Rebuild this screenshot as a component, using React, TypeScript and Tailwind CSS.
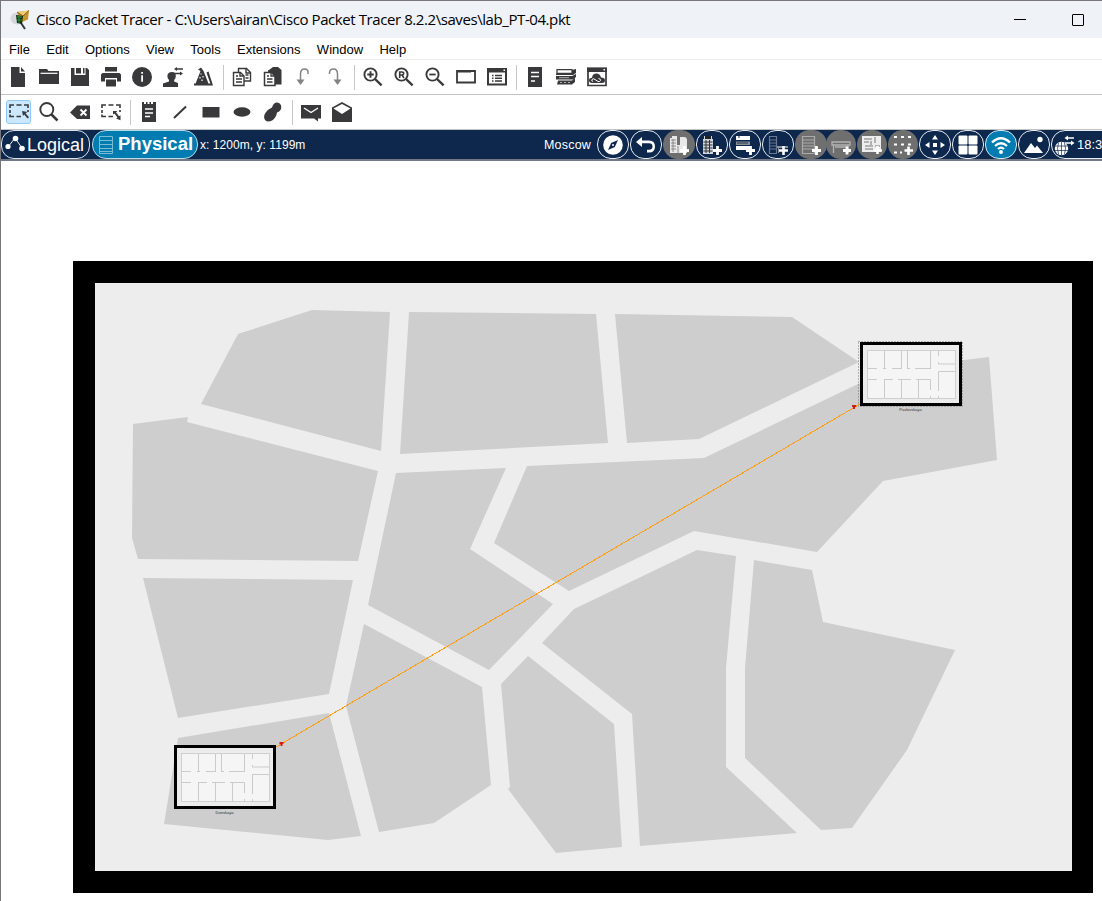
import type { ReactNode } from 'react';

const INK = '#39393b';

function Slot({ children, active = false }: { children: ReactNode; active?: boolean }) {
  return (
    <button className="flex h-[34px] w-[31px] items-center pl-[3px]">
      <span
        className={
          active
            ? 'flex h-6 w-[25px] items-center justify-center rounded-[3px] border border-[#90c8f6] bg-[#cce8ff]'
            : 'flex h-6 w-6 items-center justify-center'
        }
      >
        <svg width="20" height="20" viewBox="0 0 20 20" fill={INK} className="shrink-0">
          {children}
        </svg>
      </span>
    </button>
  );
}

function Separator() {
  return (
    <div className="flex h-[34px] w-[7px] items-center justify-center">
      <div className="h-[25px] w-px bg-[#c8c8c8]" />
    </div>
  );
}

const magnifier = (
  <>
    <circle cx="7.5" cy="7.5" r="6.1" fill="none" stroke={INK} strokeWidth="1.9" />
    <path d="M12 12l6.6 6.4" stroke={INK} strokeWidth="2.4" />
  </>
);

const dashedFrame = (
  <path
    d="M1 6V3h4M7.500 3h5M15 3h4V6M1 8v3M19 8v2M1 12.500v2h4M7.500 14.500h4.500"
    fill="none"
    stroke={INK}
    strokeWidth="1.600"
  />
);

function MainToolbar() {
  return (
    <div className="flex h-[35px] border-b border-[#c4c4c4] pl-[2px]">
      <Slot><path d="M3 0h8.500v6H17v14H3zM13 0l4 4.500h-4z" /></Slot>
      <Slot>
        <path d="M0 2h8l1.500 2H20v13H0z" />
        <path d="M1.500 6.300h17" stroke="#fff" strokeWidth="1.200" />
      </Slot>
      <Slot>
        <path d="M1 1h3.500v7h11V1H17l2 2v16H1z" />
        <path d="M6 1h5v5.500H6zM13 1h1.500v5.500H13z" />
      </Slot>
      <Slot><path d="M4 0h12v4.500H4zM1.500 6h17L20 7.500v7h-4V11H4v3.500H0v-7zM5 12.500h10V19.500H5z" /></Slot>
      <Slot>
        <circle cx="10" cy="10" r="10" />
        <path d="M9.200 5h1.800v1.800H9.200zM9.200 8.300h1.800v6.500H9.200z" fill="#fff" />
      </Slot>
      <Slot>
        <path d="M9 5c2.800 0 4 1.700 3.800 4.200-.1 1.700-.8 2.800-1.600 3.600v1.700l3.800 1.500V20H0v-3.500l6-2v-1.700C5.300 12 4.500 11 4.400 9.200 4.200 6.700 6 5 9 5z" />
        <path d="M13 2h7M11 6.500h7" stroke={INK} strokeWidth="1.400" />
        <path d="M14 0v4l-3-2zM17 4.500v4l3-2z" />
      </Slot>
      <Slot>
        <path d="M4 2.500l3-2L9.500 4l4 10 1.500 4H1L6.500 4zM0 16.500h17V18.500H0z" />
        <path d="M12.500 5.500l2-1 4.500 14h-2z" />
        <path d="M7 6.500v1M6 10v1.500M9 9v1.500M8 12.500v1.500" stroke="#fff" strokeWidth="1.200" fill="none" />
      </Slot>
      <Separator />
      <Slot>
        <g fill="#fff" stroke={INK} strokeWidth="1.400">
          <path d="M6.500 1.500h8l4 4v8.500h-12z" />
          <path d="M1.500 5.500h7l3.500 3.500v9.500H1.500z" />
          <path d="M8 5.500V9h4M14 1.500V6h4M4 9h2M4 12h6M4 15h6M13.500 8h3M13.500 11h3" fill="none" />
        </g>
      </Slot>
      <Slot>
        <path d="M5 3h1l4-3h5l3.500 3v14.500H6z" />
        <path d="M1.500 5.500h7L12 9v9.500H1.500z" fill="#fff" stroke={INK} strokeWidth="1.500" />
        <path d="M8 5.500V9h4M4 9h2M4 12h5.500M4 15h5.500" fill="none" stroke={INK} strokeWidth="1.300" />
      </Slot>
      <Slot>
        <path d="M6.500 14V7q0-5 4-5T14 6v1" fill="none" stroke="#838383" strokeWidth="1.500" />
        <path d="M2.500 12.500h8l-4 5.500z" fill="#838383" />
      </Slot>
      <Slot>
        <path d="M12.500 14V7q0-5-4-5T4.500 6v1" fill="none" stroke="#838383" strokeWidth="1.500" />
        <path d="M8.500 12.500h8l-4 5.500z" fill="#838383" />
      </Slot>
      <Separator />
      <Slot>{magnifier}<path d="M7.500 4.300v6.400M4.300 7.500h6.400" stroke={INK} strokeWidth="1.900" /></Slot>
      <Slot>
        {magnifier}
        <path d="M5.700 11V5h2.200q1.800 0 1.800 1.500T7.900 8H5.700M8 8l2 3" stroke={INK} strokeWidth="1.600" fill="none" />
      </Slot>
      <Slot>{magnifier}<path d="M4.300 7.500h6.400" stroke={INK} strokeWidth="1.800" /></Slot>
      <Slot>
        <path d="M1 4h18v11.500H1z" fill="none" stroke={INK} strokeWidth="1.800" />
        <path d="M1 3h14v2.500H1zM16 4h1v1h-1z" />
      </Slot>
      <Slot>
        <path d="M1 2h18v15.500H1z" fill="none" stroke={INK} strokeWidth="2" />
        <path d="M0 1h20v4.500H0z" />
        <path d="M16.500 2.500H18V4h-1.500z" fill="#fff" />
        <path d="M5 8.500h1.500M8 8.500h7M5 11.200h1.500M8 11.200h7M5 14h1.500M8 14h7" stroke={INK} strokeWidth="1.500" />
      </Slot>
      <Separator />
      <Slot>
        <path d="M3 0h14v20H3z" />
        <path d="M6 5.500h8M6 9.500h8M6 14h4" stroke="#fff" strokeWidth="1.400" />
      </Slot>
      <Slot>
        <path d="M1 2.700h15v3.600H1z" fill="#fff" stroke={INK} strokeWidth="1.200" />
        <path d="M16 3l4-1v4l-3 2H0V6.500h16zM0 9h16l4-2v3l-3 2.500H0zM2 13.500h14l3-2.500v4l-3 2.500H1z" />
        <path d="M4 15.500h2M8 15.500h2M12 15.500h2M3 10.700h10" stroke="#ccc" strokeWidth=".8" />
      </Slot>
      <Slot>
        <path d="M1 1.500h18v17H1z" fill="none" stroke={INK} strokeWidth="1.700" />
        <path d="M0 .500h20V5H0z" />
        <path d="M16.500 2H18v1.500h-1.500z" fill="#fff" />
        <path d="M5 16q-3 0-3-2.700 0-2.400 3-2.600.5-4.200 4.500-4.200 3.500 0 4.500 4 4 0 4 3 0 2.500-3 2.500z" />
        <path d="M6 14.500q-2-.5-1-2t3 0l3 2q2 .5 2.500-1t-2-2" fill="none" stroke="#fff" strokeWidth="1" />
      </Slot>
    </div>
  );
}

function DrawToolbar() {
  return (
    <div className="flex h-[35px] border-b border-[#c4c4c4] pl-[2px]">
      <Slot active>
        {dashedFrame}
        <path d="M13 9l5.500 1-2 1.200 3.500 4-1.500 1.300-3.300-4L14 14z" />
      </Slot>
      <Slot>
        <circle cx="7.800" cy="7.500" r="6.500" fill="none" stroke={INK} strokeWidth="1.900" />
        <path d="M12.500 12.500l6 6" stroke={INK} strokeWidth="2.500" />
      </Slot>
      <Slot>
        <path d="M0 10.500L7 3.500h13v13.500H7z" />
        <path d="M10.500 7.500l6 6M16.500 7.500l-6 6" stroke="#fff" strokeWidth="1.900" />
      </Slot>
      <Slot>
        {dashedFrame}
        <path d="M12 9h4.500L15 10.300l3 4 1.500-1v5l-4.500-1.800 1.500-1-3-4-1.500 1z" />
      </Slot>
      <Separator />
      <Slot>
        <path d="M3 0h2v2h2V0h1.500v2h2V0H12v2h2V0h3v20H3z" />
        <path d="M6 7h8M6 11h8M6 14.500h5" stroke="#fff" strokeWidth="1.400" />
      </Slot>
      <Slot><path d="M4 16L16 4.500" stroke={INK} strokeWidth="2" /></Slot>
      <Slot><path d="M1.500 5h17v10.500h-17z" /></Slot>
      <Slot><ellipse cx="10" cy="10" rx="8.500" ry="4.700" /></Slot>
      <Slot>
        <path d="M9 5.500Q10.500.5 14 .5q4.300.5 4.300 5-.3 3.500-4.300 5-.8 5-4.500 7.800-4.500 2.500-7.300 0-2.200-3.200 0-7Q5 7 9 5.500z" />
      </Slot>
      <Separator />
      <Slot>
        <path d="M0 3h20v13.500H0zM13 15h4v4.500l-4-3z" />
        <path d="M3 6l7 4.500L17 6" fill="none" stroke="#fff" strokeWidth="1.400" />
      </Slot>
      <Slot>
        <path d="M10 0L20 5.500V20H0V5.500z" />
        <path d="M10 2l8.500 4.500L10 12 1.500 6.500z" fill="#fff" />
      </Slot>
    </div>
  );
}

type Tone = 'navy' | 'gray' | 'blue';
const tones: Record<Tone, string> = {
  navy: 'border-[1.5px] border-[#e8edf3] bg-[#0d274d]',
  gray: 'border border-[#6f6f6f] bg-[#6f6f6f]',
  blue: 'border-[1.5px] border-[#d5eaf3] bg-[#007cb0]',
};

function Pill({ tone = 'navy', narrow = false, children }: { tone?: Tone; narrow?: boolean; children: ReactNode }) {
  return (
    <button
      className={`${tones[tone]} ${narrow ? 'w-[30px]' : 'w-8'} flex h-[29px] shrink-0 items-center justify-center rounded-[14px]`}
    >
      <svg width="20" height="20" viewBox="0 0 20 20" fill="#fff" className="shrink-0">
        {children}
      </svg>
    </button>
  );
}

const plus = <path d="M15.500 11v9M11 15.500h9" stroke="#fff" strokeWidth="2.800" />;

function LocationBar() {
  return (
    <div className="flex h-[31px] items-center overflow-hidden border-b-2 border-[#717783] bg-[#0d274d] text-white">
      <button className="flex h-[29px] w-[89px] shrink-0 items-center rounded-[13px] border border-[#dce3eb] pl-[3px]">
        <svg width="20" height="20" viewBox="0 0 20 20" fill="#fff" className="-mt-1 shrink-0">
          <path d="M3 14L10 5l7 10" stroke="#fff" fill="none" strokeWidth=".9" />
          <circle cx="3" cy="13.500" r="2.600" />
          <circle cx="10.500" cy="5.500" r="2.800" />
          <circle cx="17" cy="15.500" r="2.800" />
        </svg>
        <span className="ml-[2px] text-[18px] leading-none">Logical</span>
      </button>
      <button className="ml-[2px] flex h-[29px] w-[106px] shrink-0 items-center rounded-[14px] border-[1.5px] border-[#b9dceb] bg-[#007cb0] pl-[5px]">
        <svg width="16" height="20" viewBox="0 0 16 20" fill="none" stroke="#7dbbd5" className="shrink-0">
          <path d="M1.500 1.500h13v17h-13zM1.500 5.500h13M1.500 9.500h13M1.500 13.500h13M1.500 16.500h13" />
        </svg>
        <span className="ml-[4px] text-[18.500px] font-bold leading-none">Physical</span>
      </button>
      <span className="ml-[2px] whitespace-nowrap pt-px text-[12px] tracking-[0.050px]">x: 1200m, y: 1199m</span>
      <div className="grow" />
      <div className="flex w-[558px] shrink-0 items-center">
        <span className="w-[53px] shrink-0 pt-px text-[12.500px] tracking-[0.200px]">Moscow</span>
        <div className="flex shrink-0 gap-px">
          <Pill>
            <circle cx="10" cy="10" r="9.800" />
            <path d="M15 5l-3.200 7L5 15l3.200-7z" fill="#0d274d" />
            <circle cx="10" cy="10" r="1" />
          </Pill>
          <Pill><path d="M6 2v3.500h7q6 0 6 6t-6 6h-2v-2.700h2q3.500 0 3.500-3.300T13 8.200H6V12L0 7z" /></Pill>
          <Pill tone="gray">
            <path d="M1 3h2V1h5v9h3V2h4q3 0 3 3v13H1z" fill="#e8e8e8" />
            <path d="M2 5h5M2 8h5M2 11h5M2 14h5M4 4v13M9 11v7" stroke="#777" strokeWidth=".8" />
            {plus}
          </Pill>
          <Pill>
            <path d="M2 1h8v3H2zM1 4h10v15H1z" fill="#cfd6df" />
            <path d="M3 1h6v3H3z" fill="#222" />
            <path d="M1.500 7h9M1.500 10h9M1.500 13h9M1.500 16h9M4 5v13M7.500 5v13" stroke="#333" />
            {plus}
          </Pill>
          <Pill>
            <path d="M1 1h14v4H1zM1 11h14v4H1z" />
            <path d="M1 6.500h14v3.500H1z" fill="#888f99" />
            <path d="M3 2h2M2 8h11" stroke="#26364d" />
            {plus}
          </Pill>
          <Pill>
            <path d="M1.500 1.500h7v17h-7zM1.500 5h7M1.500 8h7M1.500 11h7M1.500 14h7" fill="none" stroke="#67788f" strokeWidth="1.200" />
            <path d="M9 11h11v2H9zM10 13h1v5h-1z" fill="#8993a1" />
            <path d="M15.500 11v9M11 15.500h9" stroke="#fff" strokeWidth="2.600" />
          </Pill>
          <Pill tone="gray">
            <path d="M1.500 1.500h12v17h-12zM1.500 5h12M1.500 8h12M1.500 11h12M1.500 14h12" fill="none" stroke="#aaa" strokeWidth="1.200" />
            {plus}
          </Pill>
        </div>
        <div className="-ml-px flex shrink-0 gap-px">
          <Pill tone="gray" narrow>
            <path d="M1 7h18v3H1zM2.500 10v8M17 10v8M4 12h13" fill="none" stroke="#b3b3b3" strokeWidth="1.300" />
            <path d="M16 11.500v8M12 15.500h8" stroke="#fff" strokeWidth="2.800" />
          </Pill>
          <Pill tone="gray" narrow>
            <path d="M0 1h19v16H0z" fill="#eee" />
            <path d="M2 4h8M13 2v6M2 7h5M9 6v4M3 11h8M13 11h5M3 14h8" stroke="#777" />
            <path d="M15.500 11v8M11.500 15.500h8.500" stroke="#fff" strokeWidth="2.600" />
          </Pill>
          <Pill tone="gray" narrow>
            <path d="M1 2h3M8 2h3M15 2h3M1 9.500h3M8 9.500h3M15 9.500h3M1 17.500h3M7 17.500h2" stroke="#fff" strokeWidth="2" />
            <path d="M15.500 11.500v8.500M11.500 15.500h8.500" stroke="#fff" strokeWidth="2.600" />
          </Pill>
          <Pill>
            <path d="M10 0l3 4.500H7zM10 20l3-4.500H7zM0 10l4.500-3v6zM20 10l-4.500-3v6zM8 8h4v4H8z" />
          </Pill>
          <Pill>
            <rect x=".5" y=".5" width="9" height="9" rx="1" />
            <rect x="10.500" y=".5" width="9" height="9" rx="1" />
            <rect x=".5" y="10.500" width="9" height="9" rx="1" />
            <rect x="10.500" y="10.500" width="9" height="9" rx="1" />
          </Pill>
          <Pill tone="blue">
            <path d="M1 7.500q9-8.500 18 0M4 11q6-5.500 12 0M7 14q3-2.800 6 0" fill="none" stroke="#fff" strokeWidth="2.300" />
            <circle cx="10" cy="17" r="2" />
          </Pill>
          <Pill>
            <path d="M0 18l7-10 4 5 2-2.500L19 18z" />
            <circle cx="16" cy="4.500" r="2.700" />
          </Pill>
          <button className="flex h-[29px] w-[75px] shrink-0 items-center rounded-[14px] border-[1.5px] border-[#e8edf3] pl-[2px]">
            <svg width="21" height="22" viewBox="0 0 21 22" fill="none" stroke="#fff" className="shrink-0">
              <circle cx="7.500" cy="14.500" r="6.700" fill="#fff" stroke="none" />
              <path d="M1 12h13M1 16.500h13M7.500 8v13M4.500 9q-2 5.500 0 11M10.500 9q2 5.500 0 11" stroke="#0d274d" strokeWidth=".7" />
              <path d="M13 4h7M11 9h7" strokeWidth="1.500" />
              <path d="M14 1.500v5L10.500 4zM17 6.500v5l3.500-2.500z" fill="#fff" stroke="none" />
            </svg>
            <span className="ml-[2px] whitespace-nowrap text-[13px] leading-none">18:3</span>
          </button>
        </div>
      </div>
    </div>
  );
}

const blocks = [
  '201,404 238,334 312,310 390,312 381,451',
  '409,312 596,314 608,443 400,454',
  '615,314 792,317 859,362 699,439 627,443',
  '133,424 188,417 187,422 378,471 358,561 138,559 132,538',
  '396,473 506,468 470,549 553,604 489,670 368,605',
  '527,466 704,458 860,383 940,363 989,357 997,460 883,481 817,552 694,531 569,591 494,543',
  '143,578 353,580 329,694 178,718',
  '178,738 329,713 361,836 328,840 164,824',
  '364,624 482,687 491,785 434,823 379,832 346,706',
  '501,684 528,656 614,724 622,847 556,853 508,789 510,787',
  '574,609 697,550 736,556 726,668 726,767 797,833 640,846 632,714 542,643',
  '754,560 812,570 823,622 955,650 907,750 852,828 821,830 745,758 745,668',
];

function Building({ x, y, label, selected = false }: { x: number; y: number; label: string; selected?: boolean }) {
  return (
    <g transform={`translate(${x} ${y})`}>
      {selected && <rect x="-1.500" y="-.5" width="104" height="65" fill="none" stroke="#777" strokeDasharray="1 2" />}
      <rect width="102" height="64" fill="#000" />
      <rect x="3" y="3" width="96" height="58" fill="#ececec" />
      <rect x="7.500" y="8.500" width="88" height="48" fill="#f5f5f5" stroke="#d0d0d0" />
      <path
        d="M24.500 9v18M41.500 9v18M47.500 9v18M70.500 9v18M78.500 9v5M78.500 20v2H95M95 29.500H78.500V49M78.500 54v2M8 26.500h9M23 26.500h3M32 26.500h10M48 26.500h2M55 26.500h15M8 37.500h9M24 37.500h9M38 37.500h13M56 37.500h14.500V48M70.500 54v2M24.500 38v18M41.500 38v18M58.500 38v18"
        fill="none"
        stroke="#cbcbcb"
      />
      <text x="50.500" y="69" textAnchor="middle" fontSize="4" fill="#333" fontFamily="Liberation Sans, sans-serif">
        {label}
      </text>
    </g>
  );
}

function CityMap() {
  return (
    <div className="h-[632px] w-[1020px] border-[22px] border-r-[21px] border-black bg-[#ededed]">
      <svg width="977" height="588" viewBox="95 283 977 588" className="block">
        <g fill="#cecece">
          {blocks.map((points) => (
            <polygon key={points} points={points} />
          ))}
        </g>
        <path d="M276 747L860 404" stroke="#ff9d14" strokeWidth="1" shapeRendering="crispEdges" />
        <path d="M852 405h4v2h-1v2h-2v-2h-1zM279.500 742h4v2h-1v2h-2v-2h-1z" fill="#d51c1c" />
        <Building x={860} y={342} label="Pavlovskaya" selected />
        <Building x={174} y={745} label="Donskaya" />
      </svg>
    </div>
  );
}

export default function App() {
  return (
    <div className="flex h-[901px] w-[1102px] flex-col overflow-hidden border-l border-t border-[#77777b] bg-white font-['Liberation_Sans',Arial,sans-serif] text-black">
      <header className="flex h-[37px] shrink-0 items-center bg-[#eff3f8]">
        <svg width="20" height="20" viewBox="0 0 20 20" className="ml-[9px] shrink-0">
          <ellipse cx="7" cy="8.500" rx="6.500" ry="6" fill="#d4d8dc" />
          <path d="M11 13l4 6" stroke="#34383c" strokeWidth="2" />
          <path d="M7 2l12-1.500-1 9-7 3z" fill="#c69532" />
          <path d="M7 2l6 4 6-5.500" fill="#f0ce70" stroke="#6b4a12" strokeWidth=".8" />
          <path d="M6 5l7 1-1 8-5-1z" fill="#102d13" />
          <path d="M7 7h5M7 10h5M9 6v7" stroke="#2b9a37" />
        </svg>
        <span className="ml-[6px] whitespace-nowrap font-['Open_Sans','Noto_Sans',sans-serif] text-[15px] tracking-[-0.420px]">
          Cisco Packet Tracer - C:\Users\airan\Cisco Packet Tracer 8.2.2\saves\lab_PT-04.pkt
        </span>
        <div className="grow" />
        <div className="mr-[46px] h-px w-3 bg-black" />
        <div className="mr-[18px] h-3 w-3 rounded-[1px] border border-black" />
      </header>
      <nav className="flex h-[22px] shrink-0 items-center gap-[16.300px] border-b border-[#ececec] pl-[8px] pt-[2px] text-[13px]">
        {['File', 'Edit', 'Options', 'View', 'Tools', 'Extensions', 'Window', 'Help'].map((item) => (
          <span key={item}>{item}</span>
        ))}
      </nav>
      <MainToolbar />
      <DrawToolbar />
      <LocationBar />
      <main className="pl-[72px] pt-[100px]">
        <CityMap />
      </main>
    </div>
  );
}
